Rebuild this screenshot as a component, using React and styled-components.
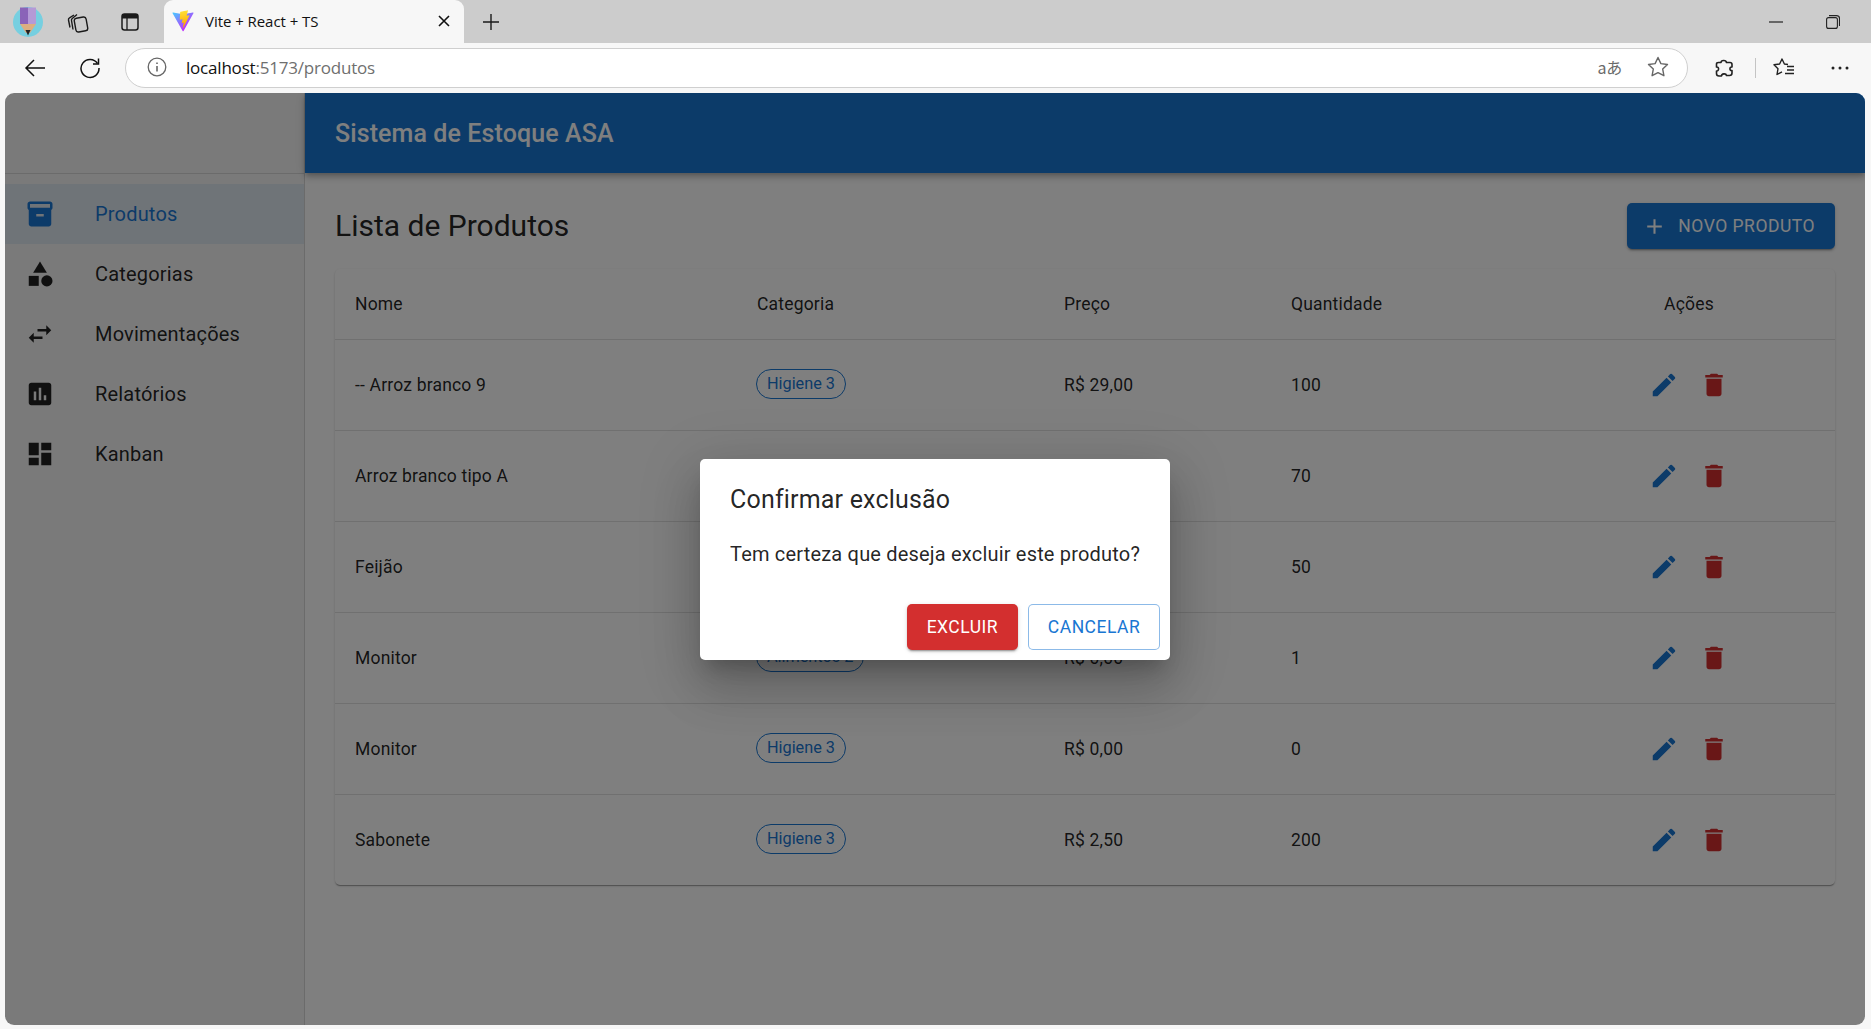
import React from "react";
import styled, { createGlobalStyle } from "styled-components";
import { MdInventory2, MdCategory, MdSwapHoriz, MdAssessment, MdDashboard, MdEdit, MdDelete, MdAdd } from "react-icons/md";

const GlobalStyle = createGlobalStyle`
  html, body { margin: 0; padding: 0; height: 100%; overflow: hidden; }
  body { background: #f7f7f7; font-family: Roboto, "Liberation Sans", sans-serif; }
  #root { height: 100%; }
  * { box-sizing: border-box; }
`;

const Window = styled.div`
  height: 1029px;
  display: flex;
  flex-direction: column;
`;

const TabStrip = styled.div`
  height: 43px;
  background: #cccccc;
  display: flex;
  align-items: center;
  flex-shrink: 0;
`;

const StripIcon = styled.div`
  width: ${(p) => p.$w}px;
  display: flex;
  justify-content: center;
  align-items: center;
  color: #1a1a1a;
  flex-shrink: 0;
`;

const Tab = styled.div`
  width: 300px;
  height: 43px;
  margin-left: 4px;
  background: #f7f7f7;
  border-radius: 9px 9px 0 0;
  display: flex;
  align-items: center;
  padding: 0 10px 2px 8px;
  font-family: "Open Sans", sans-serif;
  font-size: 15px;
  letter-spacing: -0.05px;
  color: #111;
  flex-shrink: 0;
`;

const TabTitle = styled.span`
  margin-left: 11px;
  flex: 1;
`;

const Spacer = styled.div`
  flex: ${(p) => (p.$w ? `0 0 ${p.$w}px` : 1)};
`;

const Toolbar = styled.div`
  height: 50px;
  background: #f7f7f7;
  display: flex;
  align-items: center;
  flex-shrink: 0;
`;

const AddressBar = styled.div`
  width: 1563px;
  height: 40px;
  margin-left: 14px;
  background: #fff;
  border: 1px solid #cfcfcf;
  border-radius: 20px;
  display: flex;
  align-items: center;
  padding: 0 18px 2px 21px;
  font-family: "Open Sans", sans-serif;
  font-size: 17px;
  letter-spacing: -0.2px;
`;

const Host = styled.span`
  color: #111;
  margin-left: 19px;
`;

const Path = styled.span`
  color: #6f6f6f;
`;

const Translate = styled.span`
  font-family: "Noto Sans CJK JP", "Open Sans", sans-serif;
  font-size: 16px;
  color: #6a6a6a;
  margin-right: 25px;
`;

const ToolbarDivider = styled.div`
  width: 1px;
  height: 20px;
  background: #c4c4c4;
  margin: 0 17px 0 -5px;
`;

const PageFrame = styled.div`
  flex: 1;
  margin: 0 6px 4px 5px;
  border-radius: 9px;
  overflow: hidden;
  position: relative;
  display: flex;
  background: #fff;
`;

const Sidebar = styled.aside`
  width: 300px;
  flex-shrink: 0;
  background: #f5f5f5;
  border-right: 1px solid rgba(0, 0, 0, 0.12);
`;

const SidebarTop = styled.div`
  height: 81px;
  border-bottom: 1px solid rgba(0, 0, 0, 0.12);
`;

const NavList = styled.nav`
  padding: 10px 0;
`;

const NavItem = styled.div`
  height: 60px;
  display: flex;
  align-items: center;
  padding: 0 20px;
  font-size: 20px;
  letter-spacing: 0.188px;
  color: ${(p) => (p.$active ? "#1976d2" : "rgba(0,0,0,.87)")};
  background: ${(p) => (p.$active ? "rgba(25,118,210,.1)" : "transparent")};
`;

const NavIcon = styled.div`
  width: 70px;
  display: flex;
  align-items: center;
  font-size: 30px;
  color: ${(p) => (p.$active ? "#1976d2" : "rgba(0,0,0,.87)")};
`;

const Content = styled.div`
  flex: 1;
  min-width: 0;
  display: flex;
  flex-direction: column;
`;

const Header = styled.header`
  height: 80px;
  background: #1976d2;
  color: #fff;
  display: flex;
  align-items: center;
  padding: 0 30px;
  font-size: 25px;
  font-weight: 500;
  letter-spacing: 0.1px;
  box-shadow: 0 2px 5px -1px rgba(0,0,0,.2), 0 5px 6px 0 rgba(0,0,0,.14), 0 1px 12px 0 rgba(0,0,0,.12);
  z-index: 1;
`;

const Main = styled.main`
  padding: 30px;
`;

const TitleRow = styled.div`
  display: flex;
  justify-content: space-between;
  align-items: center;
  margin-bottom: 20px;
`;

const Title = styled.h1`
  margin: 0 0 2px;
  font-size: 30px;
  font-weight: 400;
  color: rgba(0,0,0,.87);
`;

const Button = styled.button`
  height: 46px;
  border-radius: 5px;
  font-family: inherit;
  font-size: 17.5px;
  font-weight: 450;
  letter-spacing: 0.5px;
  display: inline-flex;
  align-items: center;
  padding: 0 20px;
  background: ${(p) => p.$bg};
  color: #fff;
  border: none;
  box-shadow: 0 3px 1px -2px rgba(0,0,0,.2), 0 2px 2px 0 rgba(0,0,0,.14), 0 1px 5px 0 rgba(0,0,0,.12);
`;

const GhostButton = styled(Button)`
  background: #fff;
  color: #1976d2;
  border: 1px solid rgba(25,118,210,.5);
  box-shadow: none;
  padding: 0 18.75px;
`;

const ButtonIcon = styled.span`
  display: flex;
  font-size: 25px;
  margin: 0 11px 0 -5px;
`;

const TablePaper = styled.div`
  background: #fff;
  border-radius: 5px;
  box-shadow: 0 2px 1px -1px rgba(0,0,0,.2), 0 1px 1px 0 rgba(0,0,0,.14), 0 1px 3px 0 rgba(0,0,0,.12);
`;

const Table = styled.table`
  width: 100%;
  border-collapse: collapse;
  table-layout: fixed;
  tbody tr:last-child td { border-bottom: none; }
`;

const Cell = styled.td`
  padding: 20px;
  font-size: 17.5px;
  line-height: 30px;
  letter-spacing: 0.1875px;
  color: rgba(0,0,0,.87);
  border-bottom: 1px solid #e0e0e0;
  text-align: ${(p) => (p.$center ? "center" : "left")};
`;

const HeadCell = styled(Cell).attrs({ as: "th" })`
  font-weight: 400;
`;

const Chip = styled.span`
  display: inline-flex;
  align-items: center;
  height: 30px;
  margin: 0 0 2px -1px;
  padding: 0 10px;
  border: 1px solid #1976d2;
  border-radius: 15px;
  font-size: 16.25px;
  letter-spacing: 0;
  color: #1976d2;
  vertical-align: middle;
`;

const IconButton = styled.span`
  display: inline-flex;
  padding: 10px;
  font-size: 30px;
  vertical-align: middle;
  color: ${(p) => p.$color};
`;

const Backdrop = styled.div`
  position: absolute;
  inset: 0;
  z-index: 5;
  background: rgba(0,0,0,.5);
  display: flex;
  align-items: center;
  justify-content: center;
`;

const Dialog = styled.div`
  width: 470px;
  height: 201px;
  background: #fff;
  border-radius: 5px;
  box-shadow: 0 14px 18px -8px rgba(0,0,0,.2), 0 30px 47px 3px rgba(0,0,0,.14), 0 11px 57px 10px rgba(0,0,0,.12);
  display: flex;
  flex-direction: column;
`;

const DialogTitle = styled.h2`
  margin: 0;
  padding: 21px 30px 19px;
  font-size: 25px;
  line-height: 40px;
  font-weight: 400;
  letter-spacing: 0.19px;
  color: rgba(0,0,0,.87);
`;

const DialogText = styled.p`
  margin: 0;
  padding: 0 0 25px 30px;
  font-size: 20px;
  line-height: 30px;
  letter-spacing: 0.188px;
  white-space: nowrap;
  color: rgba(0,0,0,.87);
`;

const DialogActions = styled.div`
  display: flex;
  justify-content: flex-end;
  gap: 10px;
  padding: 10px;
`;

const products = [
  { name: "-- Arroz branco 9", category: "Higiene 3", price: "R$ 29,00", qty: "100" },
  { name: "Arroz branco tipo A", category: "Alimentos 2", price: "R$ 25,00", qty: "70" },
  { name: "Feijão", category: "Alimentos 2", price: "R$ 8,00", qty: "50" },
  { name: "Monitor", category: "Alimentos 2", price: "R$ 0,00", qty: "1" },
  { name: "Monitor", category: "Higiene 3", price: "R$ 0,00", qty: "0" },
  { name: "Sabonete", category: "Higiene 3", price: "R$ 2,50", qty: "200" },
];

const navItems = [
  { label: "Produtos", Icon: MdInventory2, active: true },
  { label: "Categorias", Icon: MdCategory },
  { label: "Movimentações", Icon: MdSwapHoriz },
  { label: "Relatórios", Icon: MdAssessment },
  { label: "Kanban", Icon: MdDashboard },
];

const columnWidths = [402, 307, 227, 272, 292];

function Avatar() {
  return (
    <svg width="32" height="32" viewBox="0 0 32 32">
      <circle cx="16" cy="16" r="15" fill="#76cfe0" />
      <path d="M8 1.500h8V18H8z" fill="#8a63b8" />
      <path d="M16 1.500h8V18h-8z" fill="#b49ad6" />
      <path d="M8 18h16l-6 9h-4z" fill="#dcae80" />
      <path d="M13.500 24h5L16 29.500z" fill="#222" />
    </svg>
  );
}

function ViteLogo() {
  return (
    <svg width="22" height="22" viewBox="0 0 410 404">
      <defs>
        <linearGradient id="viteA" x1="6" y1="33" x2="235" y2="344" gradientUnits="userSpaceOnUse">
          <stop stopColor="#41D1FF" />
          <stop offset="1" stopColor="#BD34FE" />
        </linearGradient>
        <linearGradient id="viteB" x1="194" y1="8" x2="236" y2="293" gradientUnits="userSpaceOnUse">
          <stop stopColor="#FFEA83" />
          <stop offset=".08" stopColor="#FFDD35" />
          <stop offset="1" stopColor="#FFA800" />
        </linearGradient>
      </defs>
      <path d="M399.641 59.525 215.643 388.545c-3.799 6.793-13.559 6.833-17.415.073L10.582 59.556C6.38 52.19 12.68 43.266 21.028 44.76l184.195 32.923c1.175.21 2.378.208 3.553-.006l180.343-32.87c8.32-1.517 14.649 7.337 10.522 14.718Z" fill="url(#viteA)" />
      <path d="M292.965 1.574 156.801 28.255a5 5 0 0 0-4.03 4.611l-8.376 141.464c-.197 3.332 2.863 5.918 6.115 5.168l37.91-8.749c3.547-.818 6.752 2.306 6.023 5.873l-11.263 55.153c-.758 3.712 2.727 6.886 6.352 5.785l23.415-7.114c3.63-1.102 7.118 2.081 6.35 5.796l-17.899 86.633c-1.12 5.419 6.088 8.374 9.094 3.728l2.008-3.103 110.954-221.428c1.858-3.707-1.346-7.935-5.418-7.15l-39.022 7.532c-3.667.707-6.787-2.708-5.752-6.296l25.469-88.291c1.036-3.594-2.095-7.012-5.766-6.293Z" fill="url(#viteB)" />
    </svg>
  );
}

const line = { fill: "none", stroke: "currentColor", strokeWidth: 1.4 };

function App() {
  return (
    <Window>
      <GlobalStyle />
      <TabStrip>
        <StripIcon $w={56}><Avatar /></StripIcon>
        <StripIcon $w={44}>
          <svg width="22" height="22" viewBox="0 0 22 22" {...line} strokeLinejoin="round">
            <path d="M3 16.500 1.500 9c-.2-1 .2-1.800 1-2.200L7 4" />
            <path d="M6 18.500 4.500 9.500c-.2-1 .2-1.800 1-2.200L10 3.500" />
            <rect x="8" y="6.500" width="12" height="14" rx="2.500" transform="rotate(-10 14 13.500)" />
          </svg>
        </StripIcon>
        <StripIcon $w={60}>
          <svg width="20" height="20" viewBox="0 0 20 20">
            <rect x="2" y="2" width="16" height="16" rx="2.500" fill="none" stroke="currentColor" strokeWidth="1.500" />
            <path d="M2 4a2 2 0 0 1 2-2h12a2 2 0 0 1 2 2v2.500H2z" fill="currentColor" />
            <path d="M7 6v12" stroke="currentColor" strokeWidth="1.300" />
          </svg>
        </StripIcon>
        <Tab>
          <ViteLogo />
          <TabTitle>Vite + React + TS</TabTitle>
          <svg width="20" height="20" viewBox="0 0 20 20" stroke="#111" strokeWidth="1.600">
            <path d="M5 5l10 10M15 5L5 15" />
          </svg>
        </Tab>
        <StripIcon $w={54}>
          <svg width="20" height="20" viewBox="0 0 20 20" stroke="currentColor" strokeWidth="1.400">
            <path d="M10 2v16M2 10h16" />
          </svg>
        </StripIcon>
        <Spacer />
        <StripIcon $w={14}>
          <svg width="14" height="2" viewBox="0 0 14 2"><path d="M0 1h14" stroke="#222" strokeWidth="1.200" /></svg>
        </StripIcon>
        <Spacer $w={43} />
        <StripIcon $w={14}>
          <svg width="14" height="14" viewBox="0 0 14 14" fill="none" stroke="#222" strokeWidth="1.100">
            <rect x="0.600" y="2.600" width="10.800" height="10.800" rx="2" />
            <path d="M3 .6h7.500a3 3 0 0 1 3 3V11" />
          </svg>
        </StripIcon>
        <Spacer $w={31} />
      </TabStrip>
      <Toolbar>
        <StripIcon $w={69}>
          <svg width="22" height="22" viewBox="0 0 22 22" fill="none" stroke="#111" strokeWidth="1.500">
            <path d="M21 11H2M10 3l-8 8 8 8" />
          </svg>
        </StripIcon>
        <StripIcon $w={42}>
          <svg width="22" height="22" viewBox="0 0 22 22" fill="none" stroke="#111" strokeWidth="1.500">
            <path d="M18.500 6.500A9 9 0 1 0 20 11" />
            <path d="M19.500 1.500v5.500H14" />
          </svg>
        </StripIcon>
        <AddressBar>
          <svg width="20" height="20" viewBox="0 0 20 20" fill="none" stroke="#666" strokeWidth="1.300">
            <circle cx="10" cy="10" r="8.800" />
            <path d="M10 9v5.500M10 5.500v1.600" strokeWidth="1.600" />
          </svg>
          <Host>localhost</Host>
          <Path>:5173/produtos</Path>
          <Spacer />
          <Translate>aあ</Translate>
          <svg width="22" height="22" viewBox="0 0 22 22" fill="none" stroke="#666" strokeWidth="1.400" strokeLinejoin="round">
            <path d="M11 1.500l2.900 6.100 6.600.9-4.800 4.600 1.200 6.600L11 16.600l-5.900 3.100 1.200-6.600L1.500 8.500l6.600-.9z" />
          </svg>
        </AddressBar>
        <StripIcon $w={72}>
          <svg width="20" height="20" viewBox="0 0 20 20" fill="none" stroke="#222" strokeWidth="1.600" strokeLinejoin="round">
            <path d="M7 4.500C7 2 12 1.500 12.500 4.500h3.500c1.500 0 2 1 2 2v2.500c-2.500-.5-3 4 0 3.500V15c0 1.500-1 2.500-2.500 2.500H12.500C12 15 7.500 15.500 7.500 18H5c-1.500 0-2.500-1-2.500-2.500V13c2.500.5 3-4.500 0-4V6c0-1 1-1.500 2-1.500z" />
          </svg>
        </StripIcon>
        <ToolbarDivider />
        <svg width="24" height="22" viewBox="0 0 24 22" fill="none" stroke="#222" strokeWidth="1.400" strokeLinejoin="round">
          <path d="M15 7.500l-3.600-.5L9 2 6.600 7 1 7.800l4 3.900-1 5.800 5-2.700" />
          <path d="M14 9.500h7M14 13h7M12 16.500h9" />
        </svg>
        <Spacer />
        <svg width="20" height="4" viewBox="0 0 20 4" fill="#222">
          <circle cx="3" cy="2" r="1.500" />
          <circle cx="10" cy="2" r="1.500" />
          <circle cx="17" cy="2" r="1.500" />
        </svg>
        <Spacer $w={21} />
      </Toolbar>
      <PageFrame>
        <Sidebar>
          <SidebarTop />
          <NavList>
            {navItems.map(({ label, Icon, active }) => (
              <NavItem key={label} $active={active}>
                <NavIcon $active={active}><Icon /></NavIcon>
                {label}
              </NavItem>
            ))}
          </NavList>
        </Sidebar>
        <Content>
          <Header>Sistema de Estoque ASA</Header>
          <Main>
            <TitleRow>
              <Title>Lista de Produtos</Title>
              <Button $bg="#1976d2">
                <ButtonIcon><MdAdd /></ButtonIcon>
                NOVO PRODUTO
              </Button>
            </TitleRow>
            <TablePaper>
              <Table>
                <colgroup>
                  {columnWidths.map((w) => <col key={w} width={w} />)}
                </colgroup>
                <thead>
                  <tr>
                    <HeadCell>Nome</HeadCell>
                    <HeadCell>Categoria</HeadCell>
                    <HeadCell>Preço</HeadCell>
                    <HeadCell>Quantidade</HeadCell>
                    <HeadCell $center>Ações</HeadCell>
                  </tr>
                </thead>
                <tbody>
                  {products.map((p, i) => (
                    <tr key={i}>
                      <Cell>{p.name}</Cell>
                      <Cell><Chip>{p.category}</Chip></Cell>
                      <Cell>{p.price}</Cell>
                      <Cell>{p.qty}</Cell>
                      <Cell $center>
                        <IconButton $color="#1976d2"><MdEdit /></IconButton>
                        <IconButton $color="#d32f2f"><MdDelete /></IconButton>
                      </Cell>
                    </tr>
                  ))}
                </tbody>
              </Table>
            </TablePaper>
          </Main>
        </Content>
        <Backdrop>
          <Dialog>
            <DialogTitle>Confirmar exclusão</DialogTitle>
            <DialogText>Tem certeza que deseja excluir este produto?</DialogText>
            <DialogActions>
              <Button $bg="#d32f2f">EXCLUIR</Button>
              <GhostButton>CANCELAR</GhostButton>
            </DialogActions>
          </Dialog>
        </Backdrop>
      </PageFrame>
    </Window>
  );
}

export default App;
